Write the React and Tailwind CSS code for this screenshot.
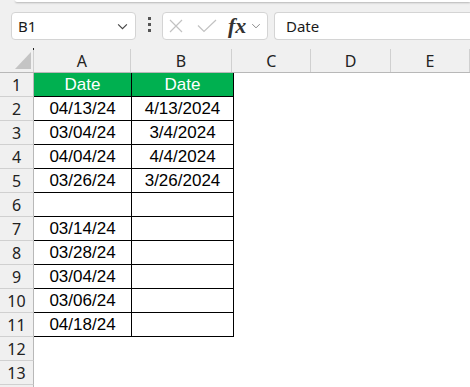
import React from 'react';

const cols = [
  { key: 'A', w: 'w-[98px]' },
  { key: 'B', w: 'w-[102px]' },
  { key: 'C', w: 'w-[80px]' },
  { key: 'D', w: 'w-[80px]' },
  { key: 'E', w: 'w-[80px]' },
];

const rows = [
  ['Date', 'Date'],
  ['04/13/24', '4/13/2024'],
  ['03/04/24', '3/4/2024'],
  ['04/04/24', '4/4/2024'],
  ['03/26/24', '3/26/2024'],
  ['', ''],
  ['03/14/24', ''],
  ['03/28/24', ''],
  ['03/04/24', ''],
  ['03/06/24', ''],
  ['04/18/24', ''],
  null,
  null,
];

function Chevron({ className }) {
  return (
    <svg className={className} viewBox="0 0 12 8" fill="none" stroke="currentColor" strokeWidth="1.3">
      <path d="M1 1.5 L6 6.5 L11 1.5" />
    </svg>
  );
}

export default function App() {
  return (
    <div className="w-[470px] h-[387px] overflow-hidden bg-white font-['Noto_Sans',sans-serif] text-[#222]">
      {/* Formula bar area */}
      <div className="relative h-[49px] bg-[#f0f0f0] flex items-start">
        <div className="absolute left-[15px] right-0 top-0 h-[2px] bg-white rounded-bl-[4px] shadow-[0_1px_2px_rgba(0,0,0,0.25)]" />
        <div className="mt-[12px] ml-[11px] w-[125px] h-[28px] rounded-[4px] border border-[#d4d4d4] bg-white flex items-center justify-between pl-[6px] pr-[7px]">
          <span className="text-[15px] text-[#1a1a1a]">B1</span>
          <Chevron className="w-[11px] h-[7px] text-[#444]" />
        </div>
        <div className="mt-[17px] ml-[12px] flex flex-col gap-[3px]">
          <div className="w-[3px] h-[3px] bg-[#555]" />
          <div className="w-[3px] h-[3px] bg-[#555]" />
          <div className="w-[3px] h-[3px] bg-[#555]" />
        </div>
        <div className="mt-[12px] ml-[11px] w-[106px] h-[28px] rounded-[4px] border border-[#d4d4d4] bg-white flex items-center pl-[6px]">
          <svg className="w-[14px] h-[14px] text-[#c2c2c2]" viewBox="0 0 14 14" fill="none" stroke="currentColor" strokeWidth="1.2">
            <path d="M1 1 L13 13 M13 1 L1 13" />
          </svg>
          <svg className="ml-[14px] w-[20px] h-[14px] text-[#c2c2c2]" viewBox="0 0 20 14" fill="none" stroke="currentColor" strokeWidth="1.2">
            <path d="M1 6.5 L7 12.5 L19 1" />
          </svg>
          <span className="ml-[11px] font-['Liberation_Serif',serif] italic font-semibold text-[22px] leading-none text-[#333]">fx</span>
          <Chevron className="ml-[5px] w-[10px] h-[6px] text-[#888]" />
        </div>
        <div className="mt-[12px] ml-[6px] flex-1 h-[28px] rounded-l-[4px] border border-r-0 border-[#d4d4d4] bg-white flex items-center pl-[11px]">
          <span className="text-[15px] text-[#1a1a1a]">Date</span>
        </div>
      </div>

      {/* Column headers */}
      <div className="flex h-[24px] bg-[#f0f0f0] border-b border-[#b8b8b8]">
        <div className="relative w-[34px] h-full border-r border-[#d0d0d0]">
          <svg className="absolute left-[15px] top-[3px] w-[16px] h-[17px]" viewBox="0 0 16 17">
            <path d="M16 0 L16 17 L0 17 Z" fill="#c4c4c4" />
          </svg>
          <div className="absolute right-[-1px] top-[-1px] w-px h-[2px] bg-[#222]" />
        </div>
        {cols.map((c) => (
          <div key={c.key} className={`${c.w} h-full border-r border-[#d0d0d0] flex items-center justify-center text-[16px]`}>
            {c.key}
          </div>
        ))}
      </div>

      {/* Rows */}
      {rows.map((r, i) => (
        <div key={i} className="flex h-[24px]">
          <div className="w-[34px] h-full shrink-0 bg-[#f0f0f0] border-r border-b border-r-[#b8b8b8] border-b-[#d0d0d0] flex items-center justify-center text-[16px]">
            {i + 1}
          </div>
          {r ? (
            <>
              <div
                className={`w-[98px] h-full shrink-0 border-r border-b border-black flex items-center justify-center font-['Liberation_Sans',sans-serif] text-[17px] ${
                  i === 0 ? 'bg-[#00b050] text-white' : 'text-black'
                }`}
              >
                {r[0]}
              </div>
              <div
                className={`w-[102px] h-full shrink-0 border-r border-b border-black flex items-center justify-center font-['Liberation_Sans',sans-serif] text-[17px] ${
                  i === 0 ? 'bg-[#00b050] text-white' : 'text-black'
                }`}
              >
                {r[1]}
              </div>
            </>
          ) : null}
        </div>
      ))}
      <div className="w-[34px] h-[3px] bg-[#f0f0f0] border-r border-[#b8b8b8]" />
    </div>
  );
}
